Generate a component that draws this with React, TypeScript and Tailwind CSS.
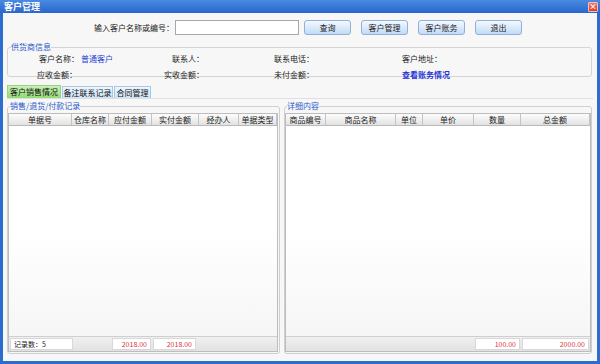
const font = { fontFamily: '"Noto Sans CJK SC", "Liberation Sans", sans-serif' };

const leftCols = [
  { name: "单据号", w: "w-[63px]" },
  { name: "仓库名称", w: "w-[37px]" },
  { name: "应付金额", w: "w-[43px]" },
  { name: "实付金额", w: "w-[47px]" },
  { name: "经办人", w: "w-[40px]" },
  { name: "单据类型", w: "w-[38px]" },
];

const rightCols = [
  { name: "商品编号", w: "w-[40px]" },
  { name: "商品名称", w: "w-[70px]" },
  { name: "单位", w: "w-[27px]" },
  { name: "单价", w: "w-[51px]" },
  { name: "数量", w: "w-[47px]" },
  { name: "总金额", w: "w-[69px]" },
];

function Btn({ label }: { label: string }) {
  return (
    <button className="h-[15px] w-[47px] rounded-[3px] border border-[#8fb0d8] bg-gradient-to-b from-[#f4f9ff] via-[#dbeafb] to-[#c2dbf6] text-[8px] leading-none text-[#222]">
      {label}
    </button>
  );
}

function Header({ cols }: { cols: { name: string; w: string }[] }) {
  return (
    <div className="flex h-[12px] border-b border-[#b9b9b9] bg-gradient-to-b from-[#fdfdfd] to-[#e2e2e2]">
      {cols.map((c) => (
        <div
          key={c.name}
          className={`${c.w} flex shrink-0 items-center justify-center border-r border-[#c4c4c4] text-[8px] leading-none text-[#222]`}
        >
          {c.name}
        </div>
      ))}
    </div>
  );
}

function Box({ w, children, right }: { w: string; children?: React.ReactNode; right?: boolean }) {
  return (
    <div className={`${w} shrink-0 px-[1px] py-[1px]`}>
      <div
        className={`flex h-full items-center border border-[#d8d8d8] bg-white px-[3px] text-[7px] leading-none ${
          right ? "justify-end text-[#e0303a]" : "text-[#222]"
        }`}
      >
        {children}
      </div>
    </div>
  );
}

export default function App() {
  return (
    <div className="flex h-[364px] w-[600px] flex-col bg-[#2d6ccf]" style={font}>
      {/* title bar */}
      <div className="flex h-[13px] items-center justify-between bg-gradient-to-b from-[#4a8ae0] to-[#2a66cc] pl-[4px] pr-[2px]">
        <span className="text-[9px] font-bold leading-none text-white">客户管理</span>
        <div className="flex h-[10px] w-[10px] items-center justify-center rounded-[1px] border border-[#f2c0c0] bg-gradient-to-b from-[#f07a6a] to-[#d83a2a] text-[8px] font-bold leading-none text-white">
          ×
        </div>
      </div>

      <div className="mx-[3px] mb-[3px] flex flex-1 flex-col bg-[#f7f7f7] px-[4px]">
        {/* search row */}
        <div className="mt-[7px] flex h-[15px] items-center">
          <span className="ml-[87px] w-[80px] text-[8px] leading-none text-[#222]">输入客户名称或编号：</span>
          <input className="ml-[1px] h-[15px] w-[124px] border border-[#a8a8a8] bg-white" />
          <div className="ml-[5px] flex gap-[10px]">
            <Btn label="查询" />
            <Btn label="客户管理" />
            <Btn label="客户账务" />
            <Btn label="退出" />
          </div>
        </div>

        {/* supplier info */}
        <fieldset className="mr-[1px] mt-[8px] h-[34px] rounded-[3px] border border-[#d4d4d4] pl-[3px]">
          <legend className="text-[8px] leading-none text-[#2a57c9]">供货商信息</legend>
          <div className="mt-[2px] grid grid-cols-[114px_79px_110px_1fr] text-[8px] leading-none text-[#222]">
            <div className="flex h-[12px] items-center">
              <span className="w-[68px] text-right">客户名称：</span>
              <span className="ml-[2px] text-[#2a3fd0]">普通客户</span>
            </div>
            <div className="flex h-[12px] items-center justify-end">联系人：</div>
            <div className="flex h-[12px] items-center justify-end">联系电话：</div>
            <div className="flex h-[12px] items-center pl-[88px]">客户地址：</div>
            <div className="mt-[4px] flex h-[12px] items-center">
              <span className="w-[66px] text-right">应收金额：</span>
            </div>
            <div className="mt-[4px] flex h-[12px] items-center justify-end">实收金额：</div>
            <div className="mt-[4px] flex h-[12px] items-center justify-end">未付金额：</div>
            <div className="mt-[4px] flex h-[12px] items-center pl-[88px] font-bold text-[#1f34d6]">查看账务情况</div>
          </div>
        </fieldset>

        {/* tabs */}
        <div className="mt-[8px] flex h-[13px] items-end">
          <div className="flex h-[13px] w-[54px] items-center justify-center border border-b-0 border-[#9ccf8a] bg-gradient-to-b from-[#c9f0b4] to-[#8fdc72] text-[8px] leading-none text-[#111]">
            客户销售情况
          </div>
          <div className="ml-[1px] flex h-[12px] w-[51px] items-center justify-center border border-b-0 border-[#a6c8e8] bg-gradient-to-b from-[#eef6fe] to-[#cfe4f8] text-[8px] leading-none text-[#111]">
            备注联系记录
          </div>
          <div className="ml-[1px] flex h-[12px] w-[37px] items-center justify-center border border-b-0 border-[#a6c8e8] bg-gradient-to-b from-[#eef6fe] to-[#cfe4f8] text-[8px] leading-none text-[#111]">
            合同管理
          </div>
        </div>

        {/* panels */}
        <div className="flex flex-1 gap-[4px] border-t border-[#e0e0e0] pb-[7px] pr-[1px] pt-[3px]">
          <fieldset className="flex w-[273px] min-w-0 flex-col rounded-[3px] border border-[#cfcfcf] pb-[1px] pr-[1px]">
            <legend className="ml-[2px] text-[8px] leading-none text-[#2a57c9]">销售/退货/付款记录</legend>
            <div className="mt-[3px] flex w-[270px] flex-1 flex-col border border-[#bdbdbd] bg-white">
              <Header cols={leftCols} />
              <div className="flex-1 bg-gradient-to-b from-white via-white to-[#f6f6f6]" />
              <div className="flex h-[15px] border-t border-[#cfcfcf] bg-gradient-to-b from-[#f0f0f0] to-[#e2e2e2]">
                <Box w="w-[65px]">记录数：5</Box>
                <div className="w-[37px] shrink-0" />
                <Box w="w-[41px]" right>2018.00</Box>
                <Box w="w-[45px]" right>2018.00</Box>
              </div>
            </div>
          </fieldset>

          <fieldset className="flex min-w-0 flex-1 flex-col rounded-[3px] border border-[#cfcfcf] pb-[1px] pr-[1px]">
            <legend className="ml-[2px] text-[8px] leading-none text-[#2a57c9]">详细内容</legend>
            <div className="mt-[3px] flex w-[306px] flex-1 flex-col border border-[#bdbdbd] bg-white">
              <Header cols={rightCols} />
              <div className="flex-1 bg-gradient-to-b from-white via-white to-[#f6f6f6]" />
              <div className="flex h-[15px] border-t border-[#cfcfcf] bg-gradient-to-b from-[#f0f0f0] to-[#e2e2e2]">
                <div className="w-[188px] shrink-0" />
                <Box w="w-[47px]" right>100.00</Box>
                <Box w="w-[69px]" right>2000.00</Box>
              </div>
            </div>
          </fieldset>
        </div>
      </div>
    </div>
  );
}
